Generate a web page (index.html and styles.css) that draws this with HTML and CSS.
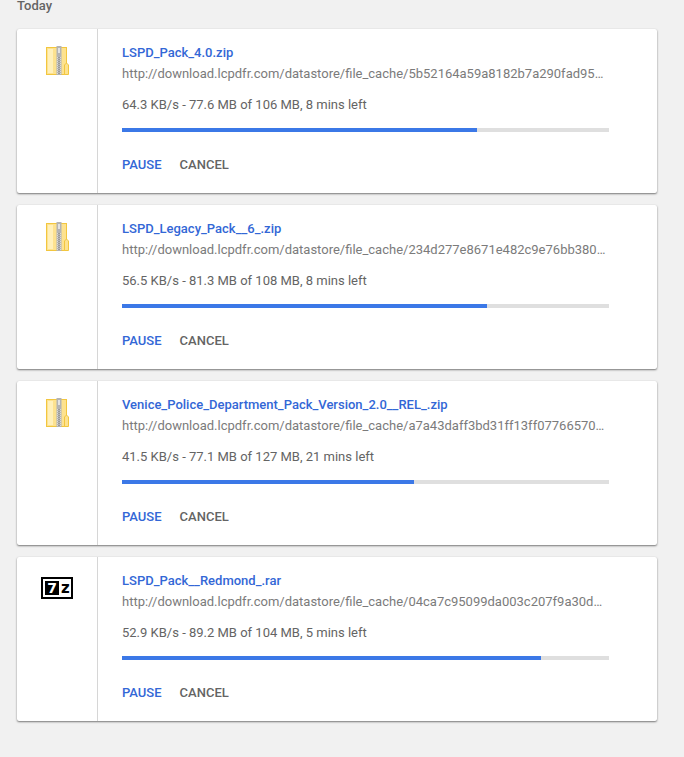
FILE: index.html
```html
<!DOCTYPE html>
<html lang="en">
<head>
  <meta charset="UTF-8"/>
  <title>Downloads</title>
  <link rel="stylesheet" href="styles.css">
</head>
<body>
  <main class="downloads">
    <h2 class="day">Today</h2>

    <section class="card">
      <div class="card-icon">
        <svg class="zip-icon" width="24" height="30" viewBox="0 0 24 30">
          <rect x="0.5" y="1.5" width="20" height="27" fill="#fde28f" stroke="#f2c63f"/>
          <rect x="2" y="3" width="5" height="24" fill="#fff0bb"/>
          <path d="M18.5 28.5v-9.5l2-2 2 2v9.500z" fill="#fde28f" stroke="#f2c63f"/>
          <rect x="10.500" y="0" width="5" height="29" fill="#b4b4b4"/>
          <rect x="12" y="2" width="2" height="5" fill="#e2e2e2"/>
          <path d="M13 11v17" stroke="#fff" stroke-width="3" stroke-dasharray="1 1"/>
          <path d="M13 11v17" stroke="#333" stroke-width="1" stroke-dasharray="1 1"/>
        </svg>
      </div>
      <div class="card-body">
        <a class="file-name">LSPD_Pack_4.0.zip</a>
        <div class="file-url">http://download.lcpdfr.com/datastore/file_cache/5b52164a59a8182b7a290fad95c1e7d04f3b2a6e</div>
        <div class="file-status">64.3 KB/s - 77.6 MB of 106 MB, 8 mins left</div>
        <div class="progress"><div class="progress-fill" style="width:72.9%"></div></div>
        <div class="actions"><a class="action primary">Pause</a><a class="action">Cancel</a></div>
      </div>
    </section>

    <section class="card">
      <div class="card-icon">
        <svg class="zip-icon" width="24" height="30" viewBox="0 0 24 30">
          <rect x="0.5" y="1.5" width="20" height="27" fill="#fde28f" stroke="#f2c63f"/>
          <rect x="2" y="3" width="5" height="24" fill="#fff0bb"/>
          <path d="M18.5 28.5v-9.5l2-2 2 2v9.500z" fill="#fde28f" stroke="#f2c63f"/>
          <rect x="10.500" y="0" width="5" height="29" fill="#b4b4b4"/>
          <rect x="12" y="2" width="2" height="5" fill="#e2e2e2"/>
          <path d="M13 11v17" stroke="#fff" stroke-width="3" stroke-dasharray="1 1"/>
          <path d="M13 11v17" stroke="#333" stroke-width="1" stroke-dasharray="1 1"/>
        </svg>
      </div>
      <div class="card-body">
        <a class="file-name">LSPD_Legacy_Pack__6_.zip</a>
        <div class="file-url">http://download.lcpdfr.com/datastore/file_cache/234d277e8671e482c9e76bb380c1e7d04f3b2a6e</div>
        <div class="file-status">56.5 KB/s - 81.3 MB of 108 MB, 8 mins left</div>
        <div class="progress"><div class="progress-fill" style="width:75%"></div></div>
        <div class="actions"><a class="action primary">Pause</a><a class="action">Cancel</a></div>
      </div>
    </section>

    <section class="card">
      <div class="card-icon">
        <svg class="zip-icon" width="24" height="30" viewBox="0 0 24 30">
          <rect x="0.5" y="1.5" width="20" height="27" fill="#fde28f" stroke="#f2c63f"/>
          <rect x="2" y="3" width="5" height="24" fill="#fff0bb"/>
          <path d="M18.5 28.5v-9.5l2-2 2 2v9.500z" fill="#fde28f" stroke="#f2c63f"/>
          <rect x="10.500" y="0" width="5" height="29" fill="#b4b4b4"/>
          <rect x="12" y="2" width="2" height="5" fill="#e2e2e2"/>
          <path d="M13 11v17" stroke="#fff" stroke-width="3" stroke-dasharray="1 1"/>
          <path d="M13 11v17" stroke="#333" stroke-width="1" stroke-dasharray="1 1"/>
        </svg>
      </div>
      <div class="card-body">
        <a class="file-name">Venice_Police_Department_Pack_Version_2.0__REL_.zip</a>
        <div class="file-url">http://download.lcpdfr.com/datastore/file_cache/a7a43daff3bd31ff13ff07766570c1e7d04f3b2a6e</div>
        <div class="file-status">41.5 KB/s - 77.1 MB of 127 MB, 21 mins left</div>
        <div class="progress"><div class="progress-fill" style="width:60%"></div></div>
        <div class="actions"><a class="action primary">Pause</a><a class="action">Cancel</a></div>
      </div>
    </section>

    <section class="card">
      <div class="card-icon">
        <div class="sz-icon"><span class="sz-seven">7</span><span class="sz-z">z</span></div>
      </div>
      <div class="card-body">
        <a class="file-name">LSPD_Pack__Redmond_.rar</a>
        <div class="file-url">http://download.lcpdfr.com/datastore/file_cache/04ca7c95099da003c207f9a30d1e7d04f3b2a6e</div>
        <div class="file-status">52.9 KB/s - 89.2 MB of 104 MB, 5 mins left</div>
        <div class="progress"><div class="progress-fill" style="width:86%"></div></div>
        <div class="actions"><a class="action primary">Pause</a><a class="action">Cancel</a></div>
      </div>
    </section>
  </main>
</body>
</html>
```

FILE: styles.css
```css
* { margin:0; padding:0; box-sizing:border-box; }
body {
  background:#f1f1f1;
  font-family:Roboto,sans-serif;
  font-size:13px;
  color:#5a5a5a;
}
.downloads { padding:0 27px 24px 17px; }
.day { font-size:13px; font-weight:500; line-height:12px; height:29px; color:#646464; }

/* Download card */
.card {
  display:flex;
  height:164px;
  margin-bottom:12px;
  background:#fff;
  border-radius:2px;
  box-shadow:0 1px 2px rgba(0,0,0,.5), 0 0 1px rgba(0,0,0,.08);
}
.card-icon {
  flex:none;
  width:81px;
  padding:17px 0 0 29px;
  border-right:1px solid #d6d6d6;
}
.card-icon .zip-icon { display:block; }
.card-body { flex:1; min-width:0; padding:16px 48px 0 24px; }
.file-name { display:block; line-height:16px; font-weight:500; color:#3367d6; white-space:nowrap; }
.file-url {
  margin-top:5px;
  line-height:16px;
  color:#7b7b7b;
  white-space:nowrap;
  overflow:hidden;
  text-overflow:ellipsis;
}
.file-status { margin-top:15px; line-height:16px; color:#646464; }

.progress { height:4px; margin-top:15px; background:#dfdfdf; }
.progress-fill { height:100%; background:#3b78e7; }

.actions { display:flex; gap:18px; margin-top:25px; }
.action { font-size:13px; font-weight:500; line-height:16px; text-transform:uppercase; color:#646464; }
.action.primary { color:#3367d6; }

/* 7z logo */
.sz-icon {
  display:flex;
  align-items:center;
  gap:2px;
  width:32px;
  height:22px;
  margin:3px 0 0 -5px;
  padding:2px;
  border:2px solid #000;
  background:#fff;
  font-family:"DejaVu Sans",sans-serif;
  font-weight:700;
  line-height:14px;
  color:#000;
}
.sz-seven { flex:none; width:14px; height:14px; background:#000; color:#fff; font-size:14px; text-align:center; }
.sz-z { font-size:15px; }
```
